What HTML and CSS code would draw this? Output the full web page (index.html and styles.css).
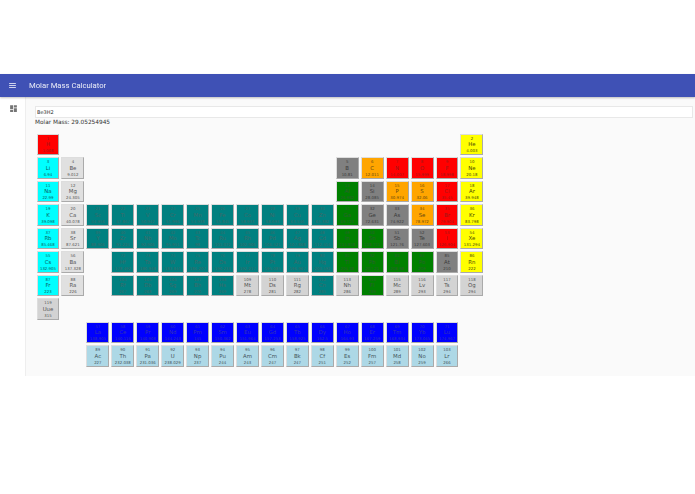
FILE: index.html
```html
<!DOCTYPE html>
<html lang="en">
<head>
<meta charset="utf-8">
<title>Molar Mass Calculator</title>
<link rel="stylesheet" href="styles.css">
</head>
<body>
<div class="app">
  <header class="bar">
    <svg class="menu" viewBox="0 0 24 24"><path d="M3 18h18v-2H3v2zm0-5h18v-2H3v2zm0-7v2h18V6H3z"/></svg>
    <h1 class="title">Molar Mass Calculator</h1>
  </header>
  <div class="body">
    <nav class="rail">
      <svg class="dash" viewBox="0 0 24 24"><path d="M3 13h8V3H3v10zm0 8h8v-6H3v6zm10 0h8V11h-8v10zm0-18v6h8V3h-8z"/></svg>
    </nav>
    <main class="content">
      <input class="formula" type="text" value="Be3H2">
      <div class="result">Molar Mass: 29.05254945</div>
      <div class="table">
        <button class="el red"><i>1</i><b>H</b><i>1.008</i></button>
        <button class="el yellow c18"><i>2</i><b>He</b><i>4.003</i></button>
        <button class="el cyan"><i>3</i><b>Li</b><i>6.94</i></button>
        <button class="el pale"><i>4</i><b>Be</b><i>9.012</i></button>
        <button class="el gray c13"><i>5</i><b>B</b><i>10.81</i></button>
        <button class="el orange"><i>6</i><b>C</b><i>12.011</i></button>
        <button class="el red"><i>7</i><b>N</b><i>14.007</i></button>
        <button class="el red"><i>8</i><b>O</b><i>15.999</i></button>
        <button class="el red"><i>9</i><b>F</b><i>18.998</i></button>
        <button class="el yellow"><i>10</i><b>Ne</b><i>20.18</i></button>
        <button class="el cyan"><i>11</i><b>Na</b><i>22.99</i></button>
        <button class="el pale"><i>12</i><b>Mg</b><i>24.305</i></button>
        <button class="el green c13"><i>13</i><b>Al</b><i>26.982</i></button>
        <button class="el gray"><i>14</i><b>Si</b><i>28.085</i></button>
        <button class="el orange"><i>15</i><b>P</b><i>30.974</i></button>
        <button class="el orange"><i>16</i><b>S</b><i>32.06</i></button>
        <button class="el red"><i>17</i><b>Cl</b><i>35.45</i></button>
        <button class="el yellow"><i>18</i><b>Ar</b><i>39.948</i></button>
        <button class="el cyan"><i>19</i><b>K</b><i>39.098</i></button>
        <button class="el pale"><i>20</i><b>Ca</b><i>40.078</i></button>
        <button class="el teal"><i>21</i><b>Sc</b><i>44.956</i></button>
        <button class="el teal"><i>22</i><b>Ti</b><i>47.867</i></button>
        <button class="el teal"><i>23</i><b>V</b><i>50.942</i></button>
        <button class="el teal"><i>24</i><b>Cr</b><i>51.996</i></button>
        <button class="el teal"><i>25</i><b>Mn</b><i>54.938</i></button>
        <button class="el teal"><i>26</i><b>Fe</b><i>55.845</i></button>
        <button class="el teal"><i>27</i><b>Co</b><i>58.933</i></button>
        <button class="el teal"><i>28</i><b>Ni</b><i>58.693</i></button>
        <button class="el teal"><i>29</i><b>Cu</b><i>63.546</i></button>
        <button class="el teal"><i>30</i><b>Zn</b><i>65.382</i></button>
        <button class="el green"><i>31</i><b>Ga</b><i>69.723</i></button>
        <button class="el gray"><i>32</i><b>Ge</b><i>72.631</i></button>
        <button class="el gray"><i>33</i><b>As</b><i>74.922</i></button>
        <button class="el orange"><i>34</i><b>Se</b><i>78.972</i></button>
        <button class="el red"><i>35</i><b>Br</b><i>79.904</i></button>
        <button class="el yellow"><i>36</i><b>Kr</b><i>83.798</i></button>
        <button class="el cyan"><i>37</i><b>Rb</b><i>85.468</i></button>
        <button class="el pale"><i>38</i><b>Sr</b><i>87.621</i></button>
        <button class="el teal"><i>39</i><b>Y</b><i>88.906</i></button>
        <button class="el teal"><i>40</i><b>Zr</b><i>91.224</i></button>
        <button class="el teal"><i>41</i><b>Nb</b><i>92.906</i></button>
        <button class="el teal"><i>42</i><b>Mo</b><i>95.951</i></button>
        <button class="el teal"><i>43</i><b>Tc</b><i>98</i></button>
        <button class="el teal"><i>44</i><b>Ru</b><i>101.072</i></button>
        <button class="el teal"><i>45</i><b>Rh</b><i>102.906</i></button>
        <button class="el teal"><i>46</i><b>Pd</b><i>106.421</i></button>
        <button class="el teal"><i>47</i><b>Ag</b><i>107.868</i></button>
        <button class="el teal"><i>48</i><b>Cd</b><i>112.414</i></button>
        <button class="el green"><i>49</i><b>In</b><i>114.818</i></button>
        <button class="el green"><i>50</i><b>Sn</b><i>118.711</i></button>
        <button class="el gray"><i>51</i><b>Sb</b><i>121.76</i></button>
        <button class="el gray"><i>52</i><b>Te</b><i>127.603</i></button>
        <button class="el red"><i>53</i><b>I</b><i>126.904</i></button>
        <button class="el yellow"><i>54</i><b>Xe</b><i>131.294</i></button>
        <button class="el cyan"><i>55</i><b>Cs</b><i>132.905</i></button>
        <button class="el pale"><i>56</i><b>Ba</b><i>137.328</i></button>
        <button class="el teal c4"><i>72</i><b>Hf</b><i>178.492</i></button>
        <button class="el teal"><i>73</i><b>Ta</b><i>180.948</i></button>
        <button class="el teal"><i>74</i><b>W</b><i>183.841</i></button>
        <button class="el teal"><i>75</i><b>Re</b><i>186.207</i></button>
        <button class="el teal"><i>76</i><b>Os</b><i>190.233</i></button>
        <button class="el teal"><i>77</i><b>Ir</b><i>192.217</i></button>
        <button class="el teal"><i>78</i><b>Pt</b><i>195.085</i></button>
        <button class="el teal"><i>79</i><b>Au</b><i>196.967</i></button>
        <button class="el teal"><i>80</i><b>Hg</b><i>200.592</i></button>
        <button class="el green"><i>81</i><b>Tl</b><i>204.38</i></button>
        <button class="el green"><i>82</i><b>Pb</b><i>207.21</i></button>
        <button class="el green"><i>83</i><b>Bi</b><i>208.98</i></button>
        <button class="el green"><i>84</i><b>Po</b><i>209</i></button>
        <button class="el gray"><i>85</i><b>At</b><i>210</i></button>
        <button class="el yellow"><i>86</i><b>Rn</b><i>222</i></button>
        <button class="el cyan"><i>87</i><b>Fr</b><i>223</i></button>
        <button class="el pale"><i>88</i><b>Ra</b><i>226</i></button>
        <button class="el teal c4"><i>104</i><b>Rf</b><i>267</i></button>
        <button class="el teal"><i>105</i><b>Db</b><i>268</i></button>
        <button class="el teal"><i>106</i><b>Sg</b><i>269</i></button>
        <button class="el teal"><i>107</i><b>Bh</b><i>270</i></button>
        <button class="el teal"><i>108</i><b>Hs</b><i>269</i></button>
        <button class="el silver"><i>109</i><b>Mt</b><i>278</i></button>
        <button class="el silver"><i>110</i><b>Ds</b><i>281</i></button>
        <button class="el silver"><i>111</i><b>Rg</b><i>282</i></button>
        <button class="el teal"><i>112</i><b>Cn</b><i>285</i></button>
        <button class="el silver"><i>113</i><b>Nh</b><i>286</i></button>
        <button class="el green"><i>114</i><b>Fl</b><i>289</i></button>
        <button class="el silver"><i>115</i><b>Mc</b><i>289</i></button>
        <button class="el silver"><i>116</i><b>Lv</b><i>293</i></button>
        <button class="el silver"><i>117</i><b>Ts</b><i>294</i></button>
        <button class="el silver"><i>118</i><b>Og</b><i>294</i></button>
        <button class="el silver c1"><i>119</i><b>Uue</b><i>315</i></button>
        <div class="row-end"></div>
        <button class="el blue c3"><i>57</i><b>La</b><i>138.905</i></button>
        <button class="el blue"><i>58</i><b>Ce</b><i>140.116</i></button>
        <button class="el blue"><i>59</i><b>Pr</b><i>140.908</i></button>
        <button class="el blue"><i>60</i><b>Nd</b><i>144.243</i></button>
        <button class="el blue"><i>61</i><b>Pm</b><i>145</i></button>
        <button class="el blue"><i>62</i><b>Sm</b><i>150.362</i></button>
        <button class="el blue"><i>63</i><b>Eu</b><i>151.964</i></button>
        <button class="el blue"><i>64</i><b>Gd</b><i>157.253</i></button>
        <button class="el blue"><i>65</i><b>Tb</b><i>158.925</i></button>
        <button class="el blue"><i>66</i><b>Dy</b><i>162.5</i></button>
        <button class="el blue"><i>67</i><b>Ho</b><i>164.93</i></button>
        <button class="el blue"><i>68</i><b>Er</b><i>167.259</i></button>
        <button class="el blue"><i>69</i><b>Tm</b><i>168.934</i></button>
        <button class="el blue"><i>70</i><b>Yb</b><i>173.045</i></button>
        <button class="el blue"><i>71</i><b>Lu</b><i>174.967</i></button>
        <button class="el sky c3"><i>89</i><b>Ac</b><i>227</i></button>
        <button class="el sky"><i>90</i><b>Th</b><i>232.038</i></button>
        <button class="el sky"><i>91</i><b>Pa</b><i>231.036</i></button>
        <button class="el sky"><i>92</i><b>U</b><i>238.029</i></button>
        <button class="el sky"><i>93</i><b>Np</b><i>237</i></button>
        <button class="el sky"><i>94</i><b>Pu</b><i>244</i></button>
        <button class="el sky"><i>95</i><b>Am</b><i>243</i></button>
        <button class="el sky"><i>96</i><b>Cm</b><i>247</i></button>
        <button class="el sky"><i>97</i><b>Bk</b><i>247</i></button>
        <button class="el sky"><i>98</i><b>Cf</b><i>251</i></button>
        <button class="el sky"><i>99</i><b>Es</b><i>252</i></button>
        <button class="el sky"><i>100</i><b>Fm</b><i>257</i></button>
        <button class="el sky"><i>101</i><b>Md</b><i>258</i></button>
        <button class="el sky"><i>102</i><b>No</b><i>259</i></button>
        <button class="el sky"><i>103</i><b>Lr</b><i>266</i></button>
      </div>
    </main>
  </div>
</div>
</body>
</html>
```
FILE: styles.css
```css
* { box-sizing: border-box; }
html, body { margin: 0; background: #fff; }
body { font-family: "DejaVu Sans", sans-serif; height: 494px; overflow: hidden; }
.app { padding-top: 74px; filter: blur(.3px); }
.bar {
  height: 23px;
  background: #3f51b5;
  color: #fff;
  display: flex;
  align-items: center;
  padding-left: 8px;
  gap: 12px;
  box-shadow: 0 1px 2px rgba(0,0,0,.25);
  position: relative;
}
.menu { width: 9px; height: 9px; fill: #fff; }
.title {
  margin: 0 0 1px;
  font: 400 7.7px Roboto, sans-serif;
  color: rgba(255,255,255,.9);
}
.body { display: flex; height: 279px; }
.rail { width: 26px; border-right: 1px solid #eee; padding: 7px 0 0 9px; background: #fff; }
.dash { width: 9px; height: 9px; fill: #757575; display: block; }
.content { flex: 1; background: #fafafa; padding: 9px 2px 0 9px; }
.formula {
  display: block;
  width: 100%;
  height: 12px;
  padding: 0 1px;
  margin: 0;
  border: 1px solid #e8e8e8;
  background: #fff;
  font: 5px "DejaVu Sans", sans-serif;
  color: #333;
  outline: none;
}
.result { font-size: 5.8px; line-height: 8px; color: #333; }
.table {
  display: grid;
  grid-template-columns: repeat(18, 22.94px);
  grid-auto-rows: 21.5px;
  gap: 2px;
  margin: 7.6px 0 0 1.5px;
}
.row-end { grid-column: 2 / -1; }
.el {
  margin: 0;
  padding: 1px 0;
  border: 1px solid;
  border-color: #ddd #aaa #aaa #ddd;
  font-family: "DejaVu Sans", sans-serif;
  color: #555;
  display: flex;
  flex-direction: column;
  align-items: center;
  justify-content: space-between;
  overflow: hidden;
}
.el i { font-style: normal; font-size: 3.9px; line-height: 5px; white-space: nowrap; }
.el b { font-weight: 400; font-size: 5.4px; line-height: 6px; }
.red { background: #f00; color: #a01818; }
.yellow { background: #ff0; color: #4a4a08; }
.cyan { background: #0ff; color: #0a5f5f; }
.pale { background: #e0e0e0; }
.silver { background: #d3d3d3; }
.gray { background: #808080; color: #3c3c3c; }
.orange { background: #ffa500; color: #664810; }
.green { background: #008000; color: #2e5e30; }
.teal { background: #008080; color: #3f6a6a; }
.blue { background: #00f; color: #3535b0; }
.sky { background: #add8e6; color: #44555c; }
.c1 { grid-column-start: 1; }
.c3 { grid-column-start: 3; }
.c4 { grid-column-start: 4; }
.c13 { grid-column-start: 13; }
.c18 { grid-column-start: 18; }
```
